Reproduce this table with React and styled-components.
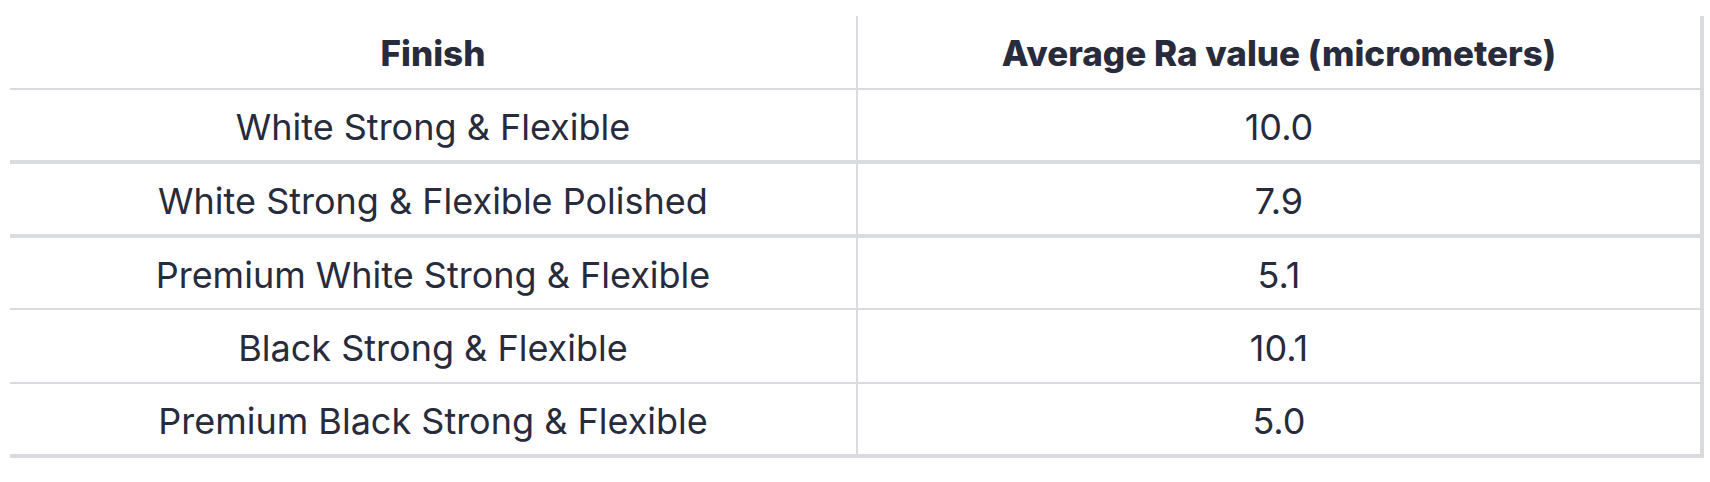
import React from 'react';
import styled, { createGlobalStyle } from 'styled-components';

const GlobalStyle = createGlobalStyle`
  html, body {
    margin: 0;
    padding: 0;
    background: #ffffff;
  }
  body {
    font-family: Inter, Lato, "Noto Sans", sans-serif;
    color: #272b3b;
  }
`

const Wrapper = styled.div`
  padding: 16px 6px 0 10px;
`

const Table = styled.table`
  width: 1694px;
  border-collapse: separate;
  border-spacing: 0;
  table-layout: fixed;
`

const HeadCell = styled.th`
  box-sizing: border-box;
  height: 74px;
  padding: 2px 0 0;
  font-size: 35px;
  font-weight: 800;
  text-align: center;
  vertical-align: middle;
  border-bottom: 2px solid #d9dbde;
  border-right: ${p => (p.$last ? '4px' : '2px')} solid #d9dbde;
  width: ${p => (p.$last ? 'auto' : '848px')};
`

const Cell = styled.td`
  box-sizing: border-box;
  height: ${p => p.$h + p.$line}px;
  padding: 4px 0 0;
  font-size: 36px;
  font-weight: 400;
  text-align: center;
  vertical-align: middle;
  border-bottom: ${p => p.$line}px solid #d9dbde;
  border-right: ${p => (p.$last ? '4px' : '2px')} solid #d9dbde;
`

const rows = [
  { finish: 'White Strong & Flexible', ra: '10.0', h: 70, line: 4 },
  { finish: 'White Strong & Flexible Polished', ra: '7.9', h: 70, line: 4 },
  { finish: 'Premium White Strong & Flexible', ra: '5.1', h: 70, line: 2 },
  { finish: 'Black Strong & Flexible', ra: '10.1', h: 72, line: 2 },
  { finish: 'Premium Black Strong & Flexible', ra: '5.0', h: 70, line: 4 },
];

const App = () => {
  return (
    <>
      <GlobalStyle />
      <Wrapper>
        <Table>
          <thead>
            <tr>
              <HeadCell>Finish</HeadCell>
              <HeadCell $last>Average Ra value (micrometers)</HeadCell>
            </tr>
          </thead>
          <tbody>
            {rows.map(r => (
              <tr key={r.finish}>
                <Cell $h={r.h} $line={r.line}>{r.finish}</Cell>
                <Cell $h={r.h} $line={r.line} $last>{r.ra}</Cell>
              </tr>
            ))}
          </tbody>
        </Table>
      </Wrapper>
    </>
  );
};

export default App;
